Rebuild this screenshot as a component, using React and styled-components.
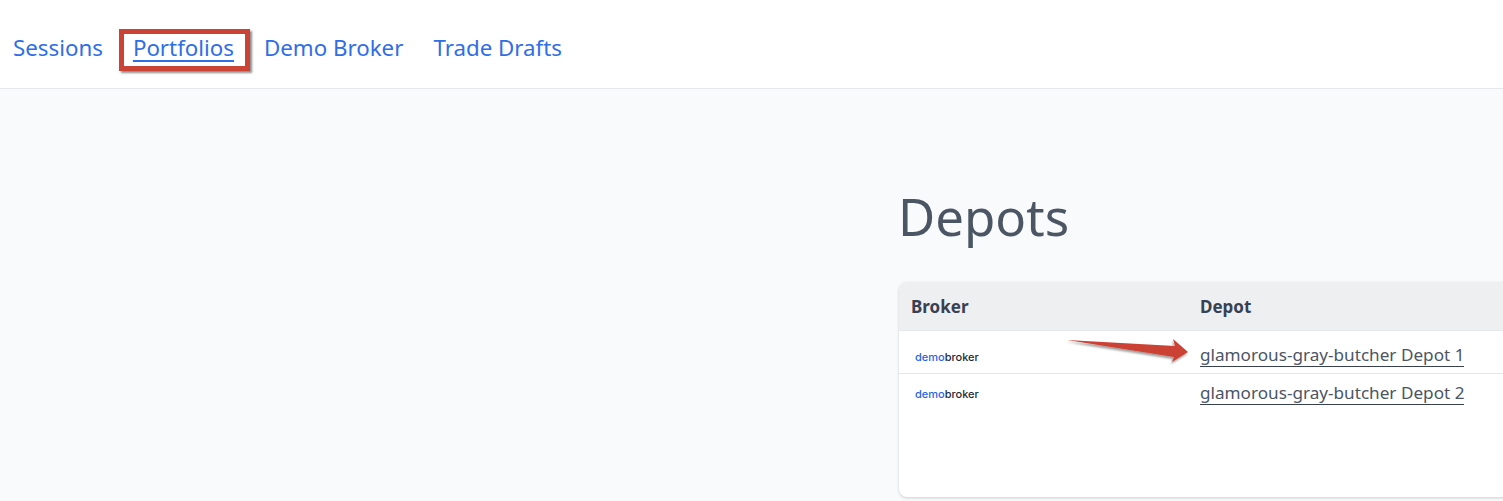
import styled, { createGlobalStyle } from "styled-components";

const GlobalStyle = createGlobalStyle`
  html, body {
    margin: 0;
    padding: 0;
    height: 100%;
    overflow: hidden;
    background: #f9fafb;
    font-family: "Noto Sans", "Open Sans", sans-serif;
  }
`;

const Nav = styled.nav`
  display: flex;
  align-items: center;
  gap: 30px;
  height: 89px;
  padding: 8px 0 0 13px;
  box-sizing: border-box;
  background: #fff;
  border-bottom: 1px solid #e5e7eb;
`;

const NavLink = styled.a`
  position: relative;
  font-size: 22.3px;
  line-height: 30px;
  color: #2f6ee8;
  text-decoration: ${(p) => (p.$active ? "underline" : "none")};
  text-decoration-thickness: 2px;
  text-underline-offset: 4px;
`;

const Highlight = styled.span`
  position: absolute;
  left: -14px;
  top: -4px;
  width: 131px;
  height: 42px;
  box-sizing: border-box;
  border: 5px solid #cb4335;
  box-shadow: 2px 2px 2px rgba(0, 0, 0, 0.45);
  pointer-events: none;
`;

const Main = styled.main`
  position: relative;
  padding: 89px 0 0 898px;
`;

const Title = styled.h1`
  margin: 0 0 28px;
  font-size: 51px;
  line-height: 76px;
  font-weight: 400;
  color: #4b5563;
`;

const Card = styled.section`
  width: 760px;
  height: 215px;
  margin-left: 1px;
  background: #fff;
  border-radius: 8px;
  box-shadow: 0 1px 3px rgba(0, 0, 0, 0.18);
  overflow: hidden;
`;

const Row = styled.div`
  display: grid;
  grid-template-columns: 289px 1fr;
  align-items: center;
  height: ${(p) => p.$height}px;
  padding: ${(p) => p.$offset || 0}px 0 0 12px;
  box-sizing: border-box;
  border-bottom: ${(p) => (p.$last ? "none" : "1px solid #e5e7eb")};
`;

const HeadRow = styled(Row)`
  background: #eeeff1;
`;

const HeadCell = styled.div`
  font-size: 17px;
  font-weight: 700;
  color: #374151;
`;

const Logo = styled.div`
  padding: 2px 0 0 4px;
  font-family: "Inter", sans-serif;
  font-size: 11px;
  font-weight: 500;
  color: #1f2937;
`;

const LogoAccent = styled.span`
  color: #2563eb;
`;

const DepotLink = styled.a`
  justify-self: start;
  font-size: 17.15px;
  line-height: 22px;
  color: #4b5563;
  border-bottom: 1px solid #374151;
`;

const Arrow = styled.svg`
  position: absolute;
  left: 1064px;
  top: 247px;
  overflow: visible;
`;

const depots = [
  { id: 1, height: 43, offset: 7, name: "glamorous-gray-butcher Depot 1" },
  { id: 2, height: 38, offset: 0, name: "glamorous-gray-butcher Depot 2", last: true },
];

export default function App() {
  return (
    <>
      <GlobalStyle />
      <Nav>
        <NavLink>Sessions</NavLink>
        <NavLink $active>
          Portfolios
          <Highlight />
        </NavLink>
        <NavLink>Demo Broker</NavLink>
        <NavLink>Trade Drafts</NavLink>
      </Nav>
      <Main>
        <Title>Depots</Title>
        <Card>
          <HeadRow $height={49}>
            <HeadCell>Broker</HeadCell>
            <HeadCell>Depot</HeadCell>
          </HeadRow>
          {depots.map((depot) => (
            <Row key={depot.id} $height={depot.height} $offset={depot.offset} $last={depot.last}>
              <Logo>
                <LogoAccent>demo</LogoAccent>broker
              </Logo>
              <DepotLink>{depot.name}</DepotLink>
            </Row>
          ))}
        </Card>
        <Arrow width="128" height="30" viewBox="0 0 128 30">
          <defs>
            <filter id="arrow-shadow" x="-10%" y="-30%" width="120%" height="170%">
              <feDropShadow dx="-1" dy="2" stdDeviation="1.2" floodColor="#000" floodOpacity="0.4" />
            </filter>
          </defs>
          <path
            d="M3 4 L111 10 L109 3 L124 16 L108 26 L110 21 Z"
            fill="#cb4335"
            filter="url(#arrow-shadow)"
          />
        </Arrow>
      </Main>
    </>
  );
}
